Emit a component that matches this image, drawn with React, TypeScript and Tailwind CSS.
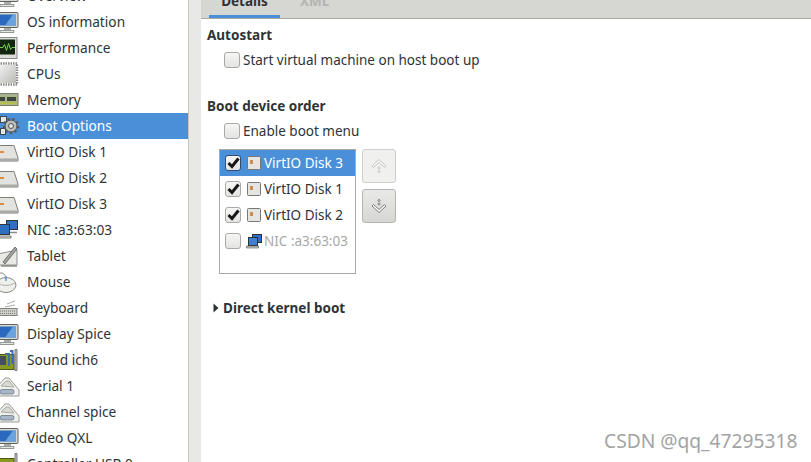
import type { ReactNode } from 'react';

const font = { fontFamily: '"Noto Sans", "Open Sans", sans-serif' };

const Svg = ({ children }: { children: ReactNode }) => (
  <svg width="22" height="26" viewBox="0 0 22 26" className="shrink-0">
    {children}
  </svg>
);

const Monitor = () => (
  <Svg>
    <rect x="-6" y="3.5" width="24" height="15" rx="1" fill="#d8dad6" stroke="#5f635f" />
    <path d="M-4 5.5h20v11H-4z" fill="#2a69bd" />
    <path d="M5 16.5 L13 5.5 H16 V16.5Z" fill="#6ba3de" />
    <path d="M4 19h7v2H4z" fill="#a9aba7" />
    <path d="M0 21.5h14v2H0z" fill="#e4e5e2" stroke="#7f817d" strokeWidth="0.8" />
  </Svg>
);

const PerfIcon = () => (
  <Svg>
    <rect x="-3" y="2.5" width="20" height="21" fill="#dcdcd8" stroke="#8a8c88" />
    <rect x="-1" y="4.5" width="16" height="15" fill="#13260f" />
    <path d="M-1 12.5h4l1.5-3 2 6 2-7 2 6 1.5-2h3" fill="none" stroke="#79d14a" strokeWidth="1" />
  </Svg>
);

const CpuIcon = () => (
  <Svg>
    <defs>
      <linearGradient id="cpu" x1="0" y1="0" x2="1" y2="1">
        <stop offset="0" stopColor="#f2f2f0" />
        <stop offset="1" stopColor="#b9b9b6" />
      </linearGradient>
    </defs>
    <rect x="-2" y="2.5" width="19" height="21" fill="none" stroke="#8b8b88" strokeWidth="2.4" strokeDasharray="1.5 1" />
    <rect x="-1" y="4" width="17" height="18" fill="url(#cpu)" />
  </Svg>
);

const MemoryIcon = () => (
  <Svg>
    <rect x="-2" y="6.5" width="20" height="12" fill="#a8b38f" stroke="#777d70" />
    <rect x="-2" y="10" width="7" height="4" fill="#41463c" />
    <rect x="7" y="10" width="9" height="4" fill="#41463c" />
    <path d="M-2 16.5h20" stroke="#c9c04f" strokeWidth="2" strokeDasharray="1 1" />
  </Svg>
);

const BootIcon = () => (
  <Svg>
    <rect x="0.5" y="3.5" width="6" height="6" fill="#e6e6e2" stroke="#3f4a57" />
    <rect x="0.5" y="15.5" width="5" height="6" fill="#e6e6e2" stroke="#3f4a57" />
    <circle cx="11" cy="13" r="6" fill="#bcbeb9" stroke="#4c4f50" />
    <circle cx="11" cy="13" r="7.2" fill="none" stroke="#55585a" strokeWidth="2" strokeDasharray="2.4 2.6" />
    <circle cx="11" cy="13" r="2.5" fill="#e0e1de" stroke="#55585a" />
  </Svg>
);

const DiskIcon = () => (
  <Svg>
    <path d="M-3 6.5H14L18 19V22H-3Z" fill="#e2e2de" stroke="#7d7e7a" />
    <path d="M-3 19.5H18V22H-3Z" fill="#a9aaa6" />
    <path d="M-1 12h5v2h-5z" fill="#dd8a45" />
  </Svg>
);

const NicIcon = () => (
  <Svg>
    <rect x="6.5" y="3.5" width="11" height="9" fill="#2f6fc0" stroke="#2f353b" />
    <rect x="-2.5" y="7.5" width="12" height="10" fill="#2f6fc0" stroke="#2f353b" />
    <path d="M-3 19h14v2h-14z" fill="#e1e2de" stroke="#5a5c58" strokeWidth="0.8" />
    <path d="M10 15.5h7" stroke="#8a8c88" strokeWidth="1.5" />
  </Svg>
);

const TabletIcon = () => (
  <Svg>
    <path d="M-2 11 L17 7 V22 H-2Z" fill="#e9e9e5" stroke="#8e8f8b" />
    <path d="M3 19 L15 4 L17 6 L5 21 Z" fill="#9fa19c" stroke="#62645f" strokeWidth="0.8" />
    <path d="M1 23h16" stroke="#6f716c" strokeWidth="1.2" />
  </Svg>
);

const MouseIcon = () => (
  <Svg>
    <ellipse cx="6" cy="16" rx="10" ry="7.5" fill="#efefec" stroke="#8c8d89" />
    <path d="M-3 14 Q6 19 15 14" fill="none" stroke="#b4b5b1" />
    <path d="M0 4 Q5 3 6 10" fill="none" stroke="#8c8d89" />
    <path d="M6 7v5" stroke="#5d96d8" strokeWidth="1.4" />
  </Svg>
);

const KeyboardIcon = () => (
  <Svg>
    <path d="M7 9 L15 6 M5 12 L15 10" stroke="#a9aaa6" fill="none" />
    <rect x="-3" y="13.5" width="20" height="7" fill="#cfcfcb" stroke="#82837f" />
    <path d="M-2 16h18M-2 18.5h18" stroke="#777874" strokeWidth="1.2" strokeDasharray="1 1" />
  </Svg>
);

const SoundIcon = () => (
  <Svg>
    <rect x="-3" y="7.5" width="17" height="15" fill="#8a991f" stroke="#4e5a14" />
    <path d="M-3 9h9v9h-9z" fill="#46505c" />
    <path d="M5 7h4v12M10 4h2.5v13" fill="none" stroke="#3f6bb4" strokeWidth="2" />
    <path d="M15 2.5h2v21h-2z" fill="#c4c6c1" stroke="#5f615c" strokeWidth="0.8" />
  </Svg>
);

const SerialIcon = () => (
  <Svg>
    <path d="M-3 14 L5 5 H9 L19 17 V23 H-3Z" fill="#f0f0ed" stroke="#9b9c98" />
    <path d="M1 13 L6 8 H9 L14 14Z" fill="#d8d8d4" stroke="#a8a9a5" />
    <rect x="0" y="16.5" width="14" height="4.5" rx="2" fill="#a6b6c8" stroke="#6c7887" strokeWidth="0.8" />
  </Svg>
);

const ControllerIcon = () => (
  <Svg>
    <rect x="-3" y="7.5" width="17" height="15" fill="#8a991f" stroke="#4e5a14" />
    <path d="M15 2.5h2v21h-2z" fill="#c4c6c1" stroke="#5f615c" strokeWidth="0.8" />
  </Svg>
);

const items: { label: string; icon: ReactNode; selected?: boolean }[] = [
  { label: 'Overview', icon: <Monitor /> },
  { label: 'OS information', icon: <Monitor /> },
  { label: 'Performance', icon: <PerfIcon /> },
  { label: 'CPUs', icon: <CpuIcon /> },
  { label: 'Memory', icon: <MemoryIcon /> },
  { label: 'Boot Options', icon: <BootIcon />, selected: true },
  { label: 'VirtIO Disk 1', icon: <DiskIcon /> },
  { label: 'VirtIO Disk 2', icon: <DiskIcon /> },
  { label: 'VirtIO Disk 3', icon: <DiskIcon /> },
  { label: 'NIC :a3:63:03', icon: <NicIcon /> },
  { label: 'Tablet', icon: <TabletIcon /> },
  { label: 'Mouse', icon: <MouseIcon /> },
  { label: 'Keyboard', icon: <KeyboardIcon /> },
  { label: 'Display Spice', icon: <Monitor /> },
  { label: 'Sound ich6', icon: <SoundIcon /> },
  { label: 'Serial 1', icon: <SerialIcon /> },
  { label: 'Channel spice', icon: <SerialIcon /> },
  { label: 'Video QXL', icon: <Monitor /> },
  { label: 'Controller USB 0', icon: <ControllerIcon /> },
];

const Checkbox = ({ checked, focused }: { checked?: boolean; focused?: boolean }) => (
  <span
    className={`flex h-[16px] w-[16px] shrink-0 items-center justify-center rounded-[3px] border bg-gradient-to-b from-[#f6f6f5] to-[#e4e4e2] ${
      focused ? 'border-[#2f4f78]' : 'border-[#a9a9a5]'
    }`}
  >
    {checked && (
      <svg width="13" height="12" viewBox="0 0 13 12">
        <path d="M1.5 6 5 9.5 11.5 1.5" fill="none" stroke="#16181a" strokeWidth="3" />
      </svg>
    )}
  </span>
);

const SmallDisk = () => (
  <svg width="14" height="14" viewBox="0 0 14 14" className="shrink-0">
    <rect x="0.5" y="0.5" width="13" height="13" rx="1" fill="#e4e4e1" stroke="#77787a" />
    <rect x="3" y="4" width="3" height="4" fill="#cf8a4f" />
  </svg>
);

const SmallNic = () => (
  <svg width="16" height="16" viewBox="0 0 16 16" className="shrink-0">
    <rect x="6.5" y="1.5" width="9" height="8" fill="#2f6fc0" stroke="#2b3138" />
    <rect x="2.5" y="4.5" width="9" height="8" fill="#3f7fcc" stroke="#2b3138" />
    <path d="M0.5 13h12v2H0.5z" fill="#c9cac6" stroke="#4f504d" strokeWidth="0.6" />
  </svg>
);

const bootRows = [
  { label: 'VirtIO Disk 3', checked: true, selected: true },
  { label: 'VirtIO Disk 1', checked: true },
  { label: 'VirtIO Disk 2', checked: true },
  { label: 'NIC :a3:63:03', disabled: true },
];

const ArrowButton = ({ dir, disabled }: { dir: 'up' | 'down'; disabled?: boolean }) => (
  <div
    className={`flex h-[34px] w-[34px] items-center justify-center rounded-[3px] border ${
      disabled
        ? 'border-[#cfcfcc] bg-[#f0f0ef]'
        : 'border-[#b4b4b0] bg-gradient-to-b from-[#e9e9e7] to-[#d6d6d3]'
    }`}
  >
    <svg width="16" height="16" viewBox="0 0 16 16" fill="none" stroke={disabled ? '#c6c6c3' : '#7c7c79'}>
      {dir === 'up' ? (
        <>
          <path d="M1 8 8 1.5 15 8l-1.5 1.5L8 4.5 2.5 9.5z" fill="#f6f6f5" />
          <circle cx="8" cy="10" r="1" />
          <circle cx="8" cy="13.5" r="1" />
        </>
      ) : (
        <>
          <path d="M1 8 8 14.5 15 8l-1.5-1.5L8 11.5 2.5 6.5z" fill="#fafaf9" />
          <circle cx="8" cy="6" r="1" />
          <circle cx="8" cy="2.5" r="1" />
        </>
      )}
    </svg>
  </div>
);

export default function App() {
  return (
    <div className="relative flex h-[462px] w-[811px] overflow-hidden bg-[#e8e8e7] text-[13.5px] text-[#2e3436]" style={font}>
      {/* device list, scrolled so the first row is cut off */}
      <div className="h-full w-[189px] shrink-0 overflow-hidden border-r border-[#c4c4c1] bg-white text-[13.7px]">
        <div className="-mt-[17px] flex flex-col">
          {items.map((it) => (
            <div
              key={it.label}
              className={`flex h-[26px] shrink-0 items-center gap-[5px] ${
                it.selected ? 'bg-[#4a90d9] text-white' : 'text-[#2e3436]'
              }`}
            >
              {it.icon}
              <span className="whitespace-nowrap">{it.label}</span>
            </div>
          ))}
        </div>
      </div>

      <div className="ml-[12px] flex h-full flex-1 flex-col bg-white">
        <div className="flex h-[19px] shrink-0 overflow-hidden border-b border-[#a9a9a6] bg-[#d6d6d3] pl-[8px]">
          <div className="flex h-[18px] w-[71px] justify-center border-b-[3px] border-[#4a90d9] font-bold">
            <span className="-mt-[6px] leading-[14px]">Details</span>
          </div>
          <div className="ml-[20px] -mt-[6px] font-bold leading-[14px] text-[#b4b4b1]">XML</div>
        </div>

        <div className="flex flex-1 flex-col pl-[6px] pt-[6px]">
          <div className="h-[20px] font-bold leading-[20px]">Autostart</div>
          <label className="ml-[17px] mt-[5px] flex h-[20px] items-center gap-[3px]">
            <Checkbox />
            <span>Start virtual machine on host boot up</span>
          </label>

          <div className="mt-[26px] h-[20px] font-bold leading-[20px]">Boot device order</div>
          <label className="ml-[17px] mt-[5px] flex h-[20px] items-center gap-[3px]">
            <Checkbox />
            <span>Enable boot menu</span>
          </label>

          <div className="ml-[12px] mt-[8px] flex gap-[6px]">
            <div className="h-[125px] w-[137px] border border-[#a9a9a6] bg-white">
              {bootRows.map((r) => (
                <div
                  key={r.label}
                  className={`flex h-[26px] items-center pl-[5px] ${
                    r.selected ? 'bg-[#4a90d9] text-white' : r.disabled ? 'text-[#a8a8a5]' : 'text-[#2e3436]'
                  }`}
                >
                  <Checkbox checked={r.checked} focused={r.selected} />
                  <span className="ml-[3px] flex w-[20px] justify-center">
                    {r.disabled ? <SmallNic /> : <SmallDisk />}
                  </span>
                  <span className="whitespace-nowrap">{r.label}</span>
                </div>
              ))}
            </div>
            <div className="flex flex-col gap-[6px]">
              <ArrowButton dir="up" disabled />
              <ArrowButton dir="down" />
            </div>
          </div>

          <div className="ml-[6px] mt-[24px] flex h-[20px] items-center gap-[4px] font-bold">
            <svg width="6" height="10" viewBox="0 0 6 10">
              <path d="M0.5 0.5 5.5 5 0.5 9.5z" fill="#2e3436" />
            </svg>
            <span>Direct kernel boot</span>
          </div>
        </div>
      </div>

      <div className="absolute left-[604px] top-[429px] text-[19.2px] leading-[24px] text-[#a3a3a3]">
        CSDN @qq_47295318
      </div>
    </div>
  );
}
